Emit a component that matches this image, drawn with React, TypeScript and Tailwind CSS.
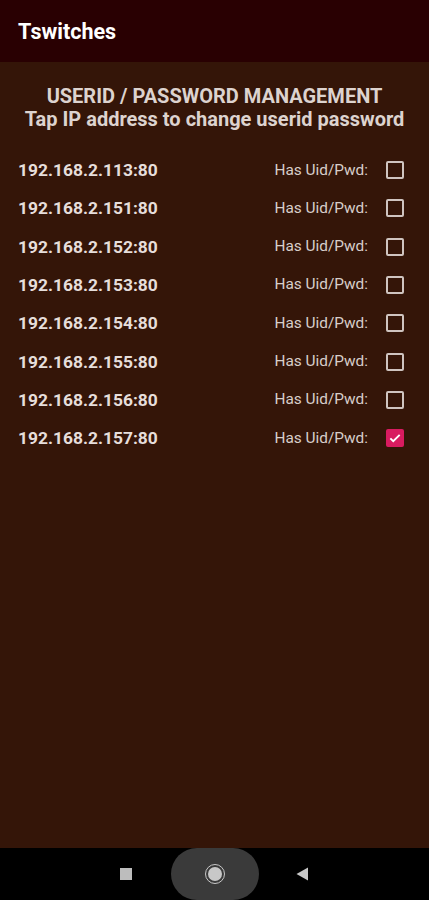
import React from 'react';

const hosts = [
  { ip: '192.168.2.113:80', has: false },
  { ip: '192.168.2.151:80', has: false },
  { ip: '192.168.2.152:80', has: false },
  { ip: '192.168.2.153:80', has: false },
  { ip: '192.168.2.154:80', has: false },
  { ip: '192.168.2.155:80', has: false },
  { ip: '192.168.2.156:80', has: false },
  { ip: '192.168.2.157:80', has: true },
];

function Box({ checked }: { checked: boolean }) {
  if (checked) {
    return (
      <div className="w-[18px] h-[18px] rounded-[2px] bg-[#d81b60] flex items-center justify-center">
        <svg width="14" height="14" viewBox="0 0 24 24" fill="none" stroke="#fff" strokeWidth="3.2">
          <path d="M4 12.5l5 5L20 6.5" />
        </svg>
      </div>
    );
  }
  return <div className="w-[18px] h-[18px] rounded-[2px] border-2 border-[#cfc4c0]" />;
}

export default function App() {
  return (
    <div className="w-[429px] h-[900px] flex flex-col bg-[#341508] font-['Roboto',sans-serif]">
      {/* App bar */}
      <div className="h-[62px] bg-[#290002] flex items-center px-[18px] pt-[3px] shrink-0">
        <span className="text-white text-[21.5px] font-bold">Tswitches</span>
      </div>

      <div className="flex-1 flex flex-col">
        <div className="pt-[23px] text-center text-[#ddd3cf] font-bold text-[20px] leading-[23px]">
          <div>USERID / PASSWORD MANAGEMENT</div>
          <div>Tap IP address to change userid password</div>
        </div>

        <div className="mt-[20px] flex flex-col">
          {hosts.map((h) => (
            <div key={h.ip} className="h-[38.3px] flex items-center pl-[18px] pr-[25px]">
              <span className="text-[#e6dedb] font-bold text-[17.4px] flex-1">{h.ip}</span>
              <span className="text-[#d8ceca] text-[15.4px] mr-[18px]">Has Uid/Pwd:</span>
              <Box checked={h.has} />
            </div>
          ))}
        </div>
      </div>

      {/* Nav bar */}
      <div className="h-[52px] bg-black flex items-center justify-center shrink-0 relative">
        <div className="w-[12px] h-[12px] bg-[#bdbdbd] absolute left-[120px] top-[20px]" />
        <div className="w-[88px] h-[52px] rounded-full bg-[#3a3a3a] flex items-center justify-center">
          <div className="w-[20px] h-[20px] rounded-full border-[1.5px] border-[#c8c8c8] flex items-center justify-center">
            <div className="w-[14px] h-[14px] rounded-full bg-[#c8c8c8]" />
          </div>
        </div>
        <svg className="absolute left-[296px] top-[19px]" width="13" height="14" viewBox="0 0 13 14">
          <path d="M12 0.5V13.5L0.5 7Z" fill="#c8c8c8" />
        </svg>
      </div>
    </div>
  );
}
